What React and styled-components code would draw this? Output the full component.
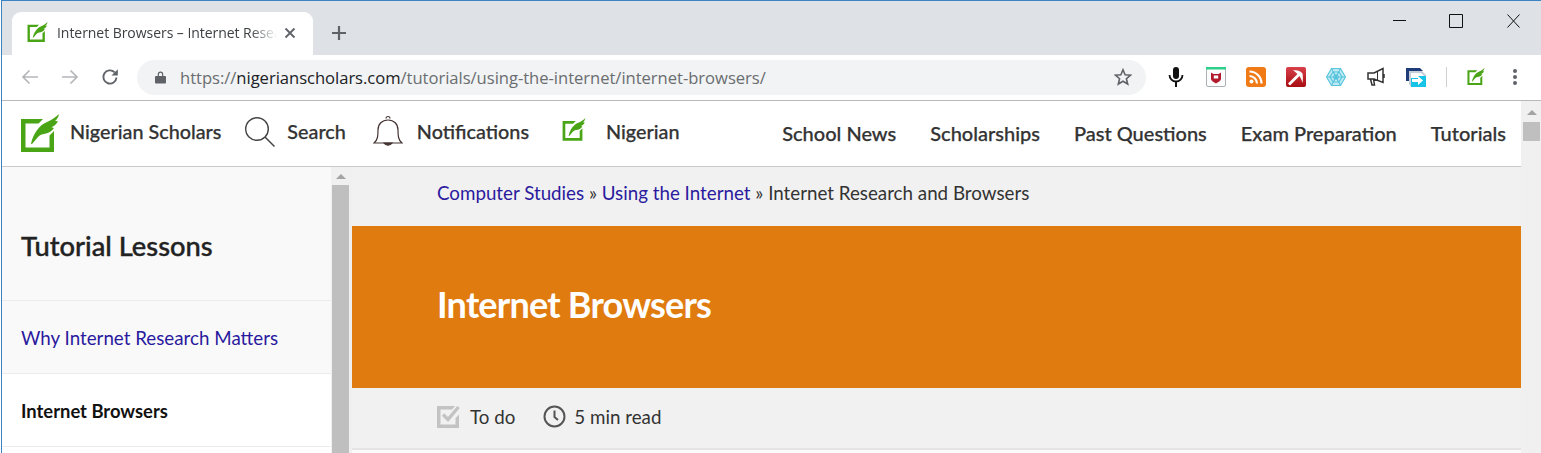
import React from "react";
import styled, { createGlobalStyle } from "styled-components";

const Global = createGlobalStyle`
  html, body { margin: 0; padding: 0; height: 453px; overflow: hidden; background: #fff; }
  * { box-sizing: border-box; }
  #root { height: 453px; }
`;

const Win = styled.div`
  height: 453px; width: 1540px; margin-left: 1px; display: flex; flex-direction: column; overflow: hidden;
  border-top: 1px solid #3b84c4; border-left: 1px solid #3b84c4;
  font-family: Lato, "Open Sans", sans-serif; color: #2a2a2a;
`;
const TabStrip = styled.div`
  height: 54px; flex: none; background: #dee1e6; display: flex; align-items: flex-end; padding-left: 10px; position: relative;
`;
const Tab = styled.div`
  width: 301px; height: 43px; background: #fff; border-radius: 9px 9px 0 0; display: flex; align-items: center;
  padding: 0 0 2px 15px; margin-right: 18px;
`;
const TabTitle = styled.span`
  font: 14px "Open Sans", "Noto Sans", sans-serif; color: #3c4043; margin-left: 9px; width: 220px; white-space: nowrap; overflow: hidden;
  letter-spacing: -0.05px;
  -webkit-mask-image: linear-gradient(90deg, #000 88%, transparent);
  mask-image: linear-gradient(90deg, #000 88%, transparent);
`;
const TabClose = styled.span` display: flex; margin-left: 6px; `;
const NewTab = styled.span` display: flex; align-self: center; margin-top: 10px; `;
const WinControls = styled.div`
  margin-left: auto; align-self: flex-start; display: flex; padding-top: 13px; padding-right: 21px; gap: 43px; align-items: center;
`;
const Toolbar = styled.div`
  height: 46px; flex: none; background: #fff; border-bottom: 1px solid #b8b8b8; display: flex; align-items: center; padding: 0 0 1px 16px;
`;
const NavIcon = styled.span` display: flex; width: 24px; justify-content: center; margin-right: ${p => p.$mr}px; `;
const Omnibox = styled.div`
  width: 1009px; height: 35px; border-radius: 18px; background: #f1f3f4; display: flex; align-items: center; padding: 0 14px 0 18px; margin-left: 15px;
`;
const Url = styled.span`
  font: 16.62px "Open Sans", "Noto Sans", sans-serif; color: #6a6d70; margin-left: 14px; flex: 1; white-space: nowrap; letter-spacing: -0.04px;
  b { font-weight: 400; color: #202124; }
`;
const Exts = styled.div` display: flex; align-items: center; margin-left: 20px; gap: 20px; `;
const Ext = styled.span` display: flex; width: 20px; height: 20px; align-items: center; justify-content: center; `;
const Sep = styled.span` width: 1px; height: 20px; background: #cfd1d4; margin-right: -1px; `;
const Page = styled.div` flex: 1; min-height: 0; display: flex; `;
const Main = styled.div` width: 1519px; display: flex; flex-direction: column; min-width: 0; `;
const PageBar = styled.div` width: 20px; background: #f0f0f0; display: flex; flex-direction: column; padding-left: 2px; `;
const Arrow = styled.span`
  width: 0; height: 0; margin: ${p => p.$top}px 0 ${p => p.$bottom}px 4px; border-left: 5px solid transparent; border-right: 5px solid transparent; border-bottom: 5px solid #a3a3a3;
`;
const Thumb = styled.span` width: 17px; background: #bfbfbf; display: block; height: ${p => p.$h}px; flex: none; `;
const SiteHeader = styled.header`
  height: 66px; flex: none; display: flex; align-items: center; border-bottom: 1px solid #c9c9c9; background: #fff; padding: 0 15px 0 18px;
`;
const NavItem = styled.span`
  display: flex; align-items: center; margin-right: ${p => p.$mr}px; gap: ${p => p.$gap}px;
  svg { margin-bottom: ${p => p.$lift}px; }
`;
const NavLabel = styled.span`
  font-size: 19.8px; font-weight: 500; color: #333; -webkit-text-stroke: 0.25px #333; padding-bottom: 6px;
`;
const RightNav = styled.nav` margin-left: auto; display: flex; gap: 34px; margin-top: -2px; `;
const RightLink = styled.span` font-size: 20px; font-weight: 500; color: #333; -webkit-text-stroke: 0.25px #333; `;
const Body = styled.div` flex: 1; min-height: 0; display: flex; `;
const Side = styled.aside` width: 329px; flex: none; background: #fff; overflow: hidden; `;
const SideHead = styled.div`
  height: 134px; background: #f9f9f9; border-bottom: 1px solid #ececec; display: flex; align-items: center; padding: 24px 19px 0;
  font-size: 27.3px; font-weight: 500; color: #222; -webkit-text-stroke: 0.4px #222;
`;
const SideItem = styled.div`
  height: 73px; border-bottom: 1px solid #ececec; display: flex; align-items: center; padding: ${p => (p.$active ? 2 : 1)}px 19px 0;
  font-size: ${p => (p.$active ? 18.4 : 18.75)}px; color: ${p => (p.$active ? "#111" : "#2a1a9e")}; font-weight: ${p => (p.$active ? 700 : 400)};
  background: ${p => (p.$active ? "#fff" : "#f9f9f9")};
`;
const SideBar = styled.div` width: 21px; flex: none; background: #f0f0f0; display: flex; flex-direction: column; padding-left: 1px; `;
const Content = styled.main` flex: 1; background: #fafafa; min-width: 0; `;
const Crumbs = styled.div`
  height: 59px; background: #f1f1f1; display: flex; align-items: center; padding: 0 85px 8px; font-size: 18.75px; color: #333; white-space: pre;
  a { color: #2a1a9e; }
`;
const Banner = styled.div`
  height: 162px; background: #e07b0f; color: #fff; display: flex; align-items: center; padding: 0 85px 6px; font-size: 36px; font-weight: 700; letter-spacing: -0.78px;
`;
const Meta = styled.div`
  height: 62px; background: #f1f1f1; border-bottom: 2px solid #e4e4e4; display: flex; align-items: center; padding: 0 85px 4px; font-size: 18.75px; color: #333;
`;
const MetaItem = styled.span` display: flex; align-items: center; gap: ${p => p.$gap}px; margin-right: ${p => p.$mr}px; `;

const Quill = ({ size = 24 }) => (
  <svg width={size} height={size} viewBox="0 0 40 40">
    <path d="M1 5h22l-4.500 4.500H5.500v24h24V21.500l4.500-4.500V38H1z" fill="#4aa516" />
    <path d="M11 30C13 20 19 11 27 8c4-1.500 9-5 12-8-.5 3-2 5.500-4 7l3 .3c-1.500 3-4 5-6.500 6l2.500.7c-2 3-5 5-8 5.500-3 .5-6 1-8 3.500l-6 7z" fill="#4aa516" />
  </svg>
);

export default function App() {
  return (
    <Win>
      <Global />
      <TabStrip>
        <Tab>
          <Quill size={21} />
          <TabTitle>Internet Browsers – Internet Research and Browsers</TabTitle>
          <TabClose>
            <svg width="14" height="14" viewBox="0 0 14 14"><path d="M2.500 2.500l9 9M11.500 2.500l-9 9" stroke="#5f6368" strokeWidth="1.800" /></svg>
          </TabClose>
        </Tab>
        <NewTab>
          <svg width="16" height="16" viewBox="0 0 16 16"><path d="M8 1v14M1 8h14" stroke="#5f6368" strokeWidth="2.200" /></svg>
        </NewTab>
        <WinControls>
          <svg width="14" height="14" viewBox="0 0 14 14"><path d="M1 6.500h13" stroke="#111" strokeWidth="1" /></svg>
          <svg width="15" height="14" viewBox="0 0 15 14"><path d="M.5 .5h13v13H.5z" fill="none" stroke="#111" strokeWidth="1" /></svg>
          <svg width="13" height="14" viewBox="0 0 13 14"><path d="M.5 .5l12 13M12.500 .5l-12 13" stroke="#111" strokeWidth="1" /></svg>
        </WinControls>
      </TabStrip>
      <Toolbar>
        <NavIcon $mr={16}>
          <svg width="18" height="16" viewBox="0 0 18 16"><path d="M17 8H2M8.500 1.500L2 8l6.500 6.500" fill="none" stroke="#b4b7ba" strokeWidth="1.700" /></svg>
        </NavIcon>
        <NavIcon $mr={16}>
          <svg width="18" height="16" viewBox="0 0 18 16"><path d="M1 8h15M9.500 1.500L16 8l-6.500 6.500" fill="none" stroke="#b4b7ba" strokeWidth="1.700" /></svg>
        </NavIcon>
        <NavIcon $mr={0}>
          <svg width="18" height="18" viewBox="0 0 18 18"><path d="M15.500 9.500A6.600 6.600 0 1 1 13.600 4.300" fill="none" stroke="#5f6368" strokeWidth="1.900" /><path d="M10.500 7.500h6.300V1.200z" fill="#5f6368" /></svg>
        </NavIcon>
        <Omnibox>
          <svg width="11" height="14" viewBox="0 0 12 14"><path d="M1 6h10a1 1 0 0 1 1 1v6a1 1 0 0 1-1 1H1a1 1 0 0 1-1-1V7a1 1 0 0 1 1-1zM3 6V4a3 3 0 0 1 6 0v2H7.700V4a1.700 1.700 0 0 0-3.400 0v2z" fill="#5f6368" /></svg>
          <Url>https://<b>nigerianscholars.com</b>/tutorials/using-the-internet/internet-browsers/</Url>
          <svg width="18" height="18" viewBox="0 0 18 18"><path d="M9 1.800l2.100 5 5.400.4-4.100 3.500 1.300 5.300L9 13.200 4.300 16l1.300-5.300L1.500 7.200l5.400-.4z" fill="none" stroke="#5f6368" strokeWidth="1.600" /></svg>
        </Omnibox>
        <Exts>
          <Ext>
            <svg width="16" height="20" viewBox="0 0 16 20"><rect x="5" y="0" width="6" height="12" rx="3" fill="#111" /><path d="M1.500 8a6.500 6.500 0 0 0 13 0" fill="none" stroke="#111" strokeWidth="1.800" /><path d="M8 14v6" stroke="#111" strokeWidth="2" /></svg>
          </Ext>
          <Ext>
            <svg width="20" height="20" viewBox="0 0 20 20"><rect x=".5" y="1.500" width="19" height="18" rx="1.500" fill="#fdfdfd" stroke="#a9b0b6" /><rect width="20" height="2.500" fill="#2dd08a" /><path d="M5 5.500l2.500 1.500h5L15 5.500V12c0 1.500-3 3.500-5 4.500-2-1-5-3-5-4.500z" fill="#b01c2e" /><path d="M7.800 8.500h4.400v3H7.800z" fill="#fff" /></svg>
          </Ext>
          <Ext>
            <svg width="20" height="20" viewBox="0 0 20 20"><rect width="20" height="20" rx="3" fill="#ef7a16" /><circle cx="5.500" cy="14.500" r="2" fill="#fff" /><path d="M3.500 9a7.500 7.500 0 0 1 7.500 7.500M3.500 4.500a12 12 0 0 1 12 12" fill="none" stroke="#fff" strokeWidth="2.200" /></svg>
          </Ext>
          <Ext>
            <svg width="20" height="20" viewBox="0 0 20 20">
              <defs><linearGradient id="redGrad" x1="0" y1="0" x2="0" y2="1"><stop offset="0" stopColor="#d8414a" /><stop offset="1" stopColor="#a80d10" /></linearGradient></defs>
              <rect width="20" height="20" rx="2" fill="url(#redGrad)" />
              <path d="M3 17.500L13 7.500" fill="none" stroke="#fff" strokeWidth="2.800" />
              <path d="M7 3.500c4-.5 7 0 9.500 3 .5 3 .5 6 0 9.500-1-4-2.500-6.500-4.500-8.500S9 4.500 7 3.500z" fill="#fff" />
            </svg>
          </Ext>
          <Ext>
            <svg width="20" height="20" viewBox="0 0 20 20" fill="none" stroke="#58c4dc" strokeWidth="1.200"><path d="M5.500 1.500h9L19.500 10l-5 8.500h-9L.5 10z" fill="#bfeaf3" /><path d="M7 5h6l3 5-3 5H7l-3-5z" /><path d="M8.500 8h3l1 2-1 2h-3l-1-2zM1 10h18M5.500 1.500l9 17M14.500 1.500l-9 17" /></svg>
          </Ext>
          <Ext>
            <svg width="18" height="20" viewBox="0 0 18 20" fill="none" stroke="#333" strokeWidth="1.500"><path d="M1 6h6l9-4.500v14L7 12H1zM3.500 12l1.500 6h2.500l-1-6M17 7v4" /><path d="M10.500 4v9" strokeWidth="1" /></svg>
          </Ext>
          <Ext>
            <svg width="20" height="20" viewBox="0 0 20 20">
              <path d="M0 1h14l3 3H3v10H0z" fill="#1d3c78" />
              <path d="M3 4h13l4 4v12H5l-2-3z" fill="#c6ccd8" />
              <path d="M5 6h10l3 3H5z" fill="#fff" />
              <path d="M5 9h15v11H5z" fill="#18c3e8" />
              <path d="M5 6h7v5H5z" fill="#fff" />
              <path d="M6 12h6V9l5 4.500-5 4.500v-3H6z" fill="#fff" />
            </svg>
          </Ext>
          <Sep />
          <Ext><Quill size={18} /></Ext>
          <Ext>
            <svg width="6" height="18" viewBox="0 0 6 18"><circle cx="2" cy="3" r="2" fill="#5f6368" /><circle cx="2" cy="9" r="2" fill="#5f6368" /><circle cx="2" cy="15" r="2" fill="#5f6368" /></svg>
          </Ext>
        </Exts>
      </Toolbar>
      <Page>
        <Main>
          <SiteHeader>
            <NavItem $mr={24} $gap={10} $lift={0}><Quill size={40} /><NavLabel>Nigerian Scholars</NavLabel></NavItem>
            <NavItem $mr={27} $gap={12} $lift={3}>
              <svg width="30" height="30" viewBox="0 0 30 30"><circle cx="12" cy="12" r="11.300" fill="none" stroke="#444" strokeWidth="1.400" /><path d="M20 20l9.500 9.500" stroke="#444" strokeWidth="1.500" /></svg>
              <NavLabel>Search</NavLabel>
            </NavItem>
            <NavItem $mr={33} $gap={14} $lift={4}>
              <svg width="30" height="34" viewBox="0 0 30 34" fill="none" stroke="#433" strokeWidth="1.200"><path d="M1 28c4-3 4-8 4-13 0-6 4-10 10-10s10 4 10 10c0 5 0 10 4 13z" /><path d="M13 3.500a2 2 0 0 1 4 0" /><path d="M11 28a4.500 4 0 0 0 8 0z" fill="#433" /></svg>
              <NavLabel>Notifications</NavLabel>
            </NavItem>
            <NavItem $mr={0} $gap={20} $lift={7}><Quill size={24} /><NavLabel>Nigerian</NavLabel></NavItem>
            <RightNav>
              <RightLink>School News</RightLink>
              <RightLink>Scholarships</RightLink>
              <RightLink>Past Questions</RightLink>
              <RightLink>Exam Preparation</RightLink>
              <RightLink>Tutorials</RightLink>
            </RightNav>
          </SiteHeader>
          <Body>
            <Side>
              <SideHead>Tutorial Lessons</SideHead>
              <SideItem>Why Internet Research Matters</SideItem>
              <SideItem $active>Internet Browsers</SideItem>
            </Side>
            <SideBar>
              <Arrow $top={7} $bottom={6} />
              <Thumb $h={290} />
            </SideBar>
            <Content>
              <Crumbs><a>Computer Studies</a> » <a>Using the Internet</a> » Internet Research and Browsers</Crumbs>
              <Banner>Internet Browsers</Banner>
              <Meta>
                <MetaItem $mr={28} $gap={10}>
                  <svg width="23" height="23" viewBox="0 0 23 23"><path d="M0 1h18l-3 3.500H3.500v15h15V13l3.500-3.500V23H0z" fill="#c3c3c3" /><path d="M6 9.500l5 5L21.500 2" fill="none" stroke="#c3c3c3" strokeWidth="3.400" /></svg>
                  To do
                </MetaItem>
                <MetaItem $mr={0} $gap={8}>
                  <svg width="23" height="23" viewBox="0 0 23 23" fill="none" stroke="#555" strokeWidth="2"><circle cx="11.500" cy="11.500" r="10" /><path d="M11.500 5.500v6.500l3.500 3" /></svg>
                  5 min read
                </MetaItem>
              </Meta>
            </Content>
          </Body>
        </Main>
        <PageBar>
          <Arrow $top={9} $bottom={7} />
          <Thumb $h={19} />
        </PageBar>
      </Page>
    </Win>
  );
}
